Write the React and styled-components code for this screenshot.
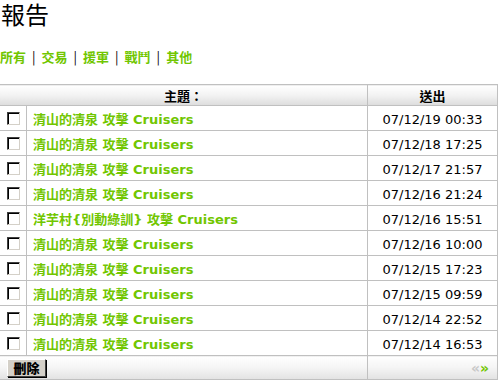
import React from "react";
import styled, { createGlobalStyle } from "styled-components";

const GlobalStyle = createGlobalStyle`
  body {
    margin: 0;
    background: #fff;
    font-family: "DejaVu Sans", Verdana, "Noto Sans CJK TC", sans-serif;
  }
`;

const GREEN = "#71c600";

const reports = [
  { subject: "清山的清泉 攻擊 Cruisers", sent: "07/12/19 00:33" },
  { subject: "清山的清泉 攻擊 Cruisers", sent: "07/12/18 17:25" },
  { subject: "清山的清泉 攻擊 Cruisers", sent: "07/12/17 21:57" },
  { subject: "清山的清泉 攻擊 Cruisers", sent: "07/12/16 21:24" },
  { subject: "洋芋村{別動綠訓} 攻擊 Cruisers", sent: "07/12/16 15:51" },
  { subject: "清山的清泉 攻擊 Cruisers", sent: "07/12/16 10:00" },
  { subject: "清山的清泉 攻擊 Cruisers", sent: "07/12/15 17:23" },
  { subject: "清山的清泉 攻擊 Cruisers", sent: "07/12/15 09:59" },
  { subject: "清山的清泉 攻擊 Cruisers", sent: "07/12/14 22:52" },
  { subject: "清山的清泉 攻擊 Cruisers", sent: "07/12/14 16:53" },
];

const tabs = ["所有", "交易", "援軍", "戰鬥", "其他"];

const Title = styled.h1`
  margin: 0;
  padding-left: 1px;
  font-family: "Noto Sans CJK TC", sans-serif;
  font-weight: 400;
  font-size: 24px;
  line-height: 28px;
  color: #000;
`;

const Nav = styled.div`
  margin-top: 20px;
  height: 16px;
  display: flex;
  align-items: center;
  font-family: "Noto Sans CJK TC", sans-serif;
  font-size: 13px;
  font-weight: 700;
`;

const NavLink = styled.a`
  color: ${GREEN};
  text-decoration: none;
`;

const Sep = styled.span`
  color: #000;
  font-weight: 400;
  margin: 0 6px;
`;

const Table = styled.table`
  margin-top: 20px;
  width: 498px;
  border-collapse: collapse;
  border: 1px solid #c0c0c0;
  border-left: none;
`;

const HeadCell = styled.th`
  height: 20px;
  padding: 0;
  border: 1px solid #c0c0c0;
  border-left: none;
  background: linear-gradient(#ffffff, #f2f2f2 50%, #dcdcdc);
  font-family: "Noto Sans CJK TC", sans-serif;
  font-size: 13px;
  font-weight: 700;
  line-height: 19px;
  text-align: center;
  width: ${(p) => p.$w || "auto"};
`;

const Cell = styled.td`
  height: 24px;
  padding: 0;
  border: 1px solid #c0c0c0;
  border-left: ${(p) => (p.$first ? "none" : "1px solid #c0c0c0")};
  text-align: ${(p) => p.$align || "left"};
  vertical-align: middle;
`;

const FootCell = styled.td`
  height: 23px;
  padding: 0;
  border: 1px solid #c0c0c0;
  border-left: ${(p) => (p.$first ? "none" : "1px solid #c0c0c0")};
  background: linear-gradient(#ffffff, #f4f4f4 50%, #e2e2e2);
  text-align: ${(p) => p.$align || "left"};
`;

const Box = styled.span`
  display: block;
  width: 11px;
  height: 11px;
  margin: 0 0 0 7px;
  border-top: 1px solid #404040;
  border-left: 1px solid #404040;
  border-right: 1px solid #d4d0c8;
  border-bottom: 1px solid #d4d0c8;
  box-shadow: inset 1px 1px 0 #000;
  background: #fff;
`;

const Subject = styled.a`
  display: block;
  padding: 3px 0 0 6px;
  color: ${GREEN};
  text-decoration: none;
  font-family: "DejaVu Sans", "Noto Sans CJK TC", sans-serif;
  font-size: 13px;
  font-weight: 700;
  line-height: 16px;
`;

const Sent = styled.span`
  font-family: "DejaVu Sans", sans-serif;
  font-size: 13px;
  color: #000;
`;

const DeleteButton = styled.button`
  margin: 0 0 0 7px;
  display: block;
  width: 39px;
  height: 18px;
  padding: 0;
  background: #d4d0c8;
  border-top: 1px solid #fff;
  border-left: 1px solid #fff;
  border-right: 1px solid #404040;
  border-bottom: 1px solid #404040;
  box-shadow: 1px 1px 0 #000;
  font-family: "Noto Sans CJK TC", sans-serif;
  font-size: 13px;
  font-weight: 900;
  line-height: 15px;
  color: #000;
`;

const Pager = styled.span`
  padding-right: 8px;
  font-family: "DejaVu Sans", sans-serif;
  font-size: 14px;
  font-weight: 700;
`;

const PageArrow = styled.span`
  color: ${(p) => (p.$active ? GREEN : "#c8c8c8")};
`;

export default function App() {
  return (
    <>
      <GlobalStyle />
      <Title>報告</Title>
      <Nav>
        {tabs.map((t, i) => (
          <React.Fragment key={t}>
            {i > 0 && <Sep>|</Sep>}
            <NavLink href="#">{t}</NavLink>
          </React.Fragment>
        ))}
      </Nav>
      <Table>
        <thead>
          <tr>
            <HeadCell colSpan={2}>主題：</HeadCell>
            <HeadCell $w="129px">送出</HeadCell>
          </tr>
        </thead>
        <tbody>
          {reports.map((r, i) => (
            <tr key={i}>
              <Cell $first style={{ width: 26 }}>
                <Box />
              </Cell>
              <Cell>
                <Subject href="#">{r.subject}</Subject>
              </Cell>
              <Cell $align="center">
                <Sent>{r.sent}</Sent>
              </Cell>
            </tr>
          ))}
        </tbody>
        <tfoot>
          <tr>
            <FootCell $first colSpan={2}>
              <DeleteButton>刪除</DeleteButton>
            </FootCell>
            <FootCell $align="right">
              <Pager>
                <PageArrow>«</PageArrow>
                <PageArrow $active>»</PageArrow>
              </Pager>
            </FootCell>
          </tr>
        </tfoot>
      </Table>
    </>
  );
}
